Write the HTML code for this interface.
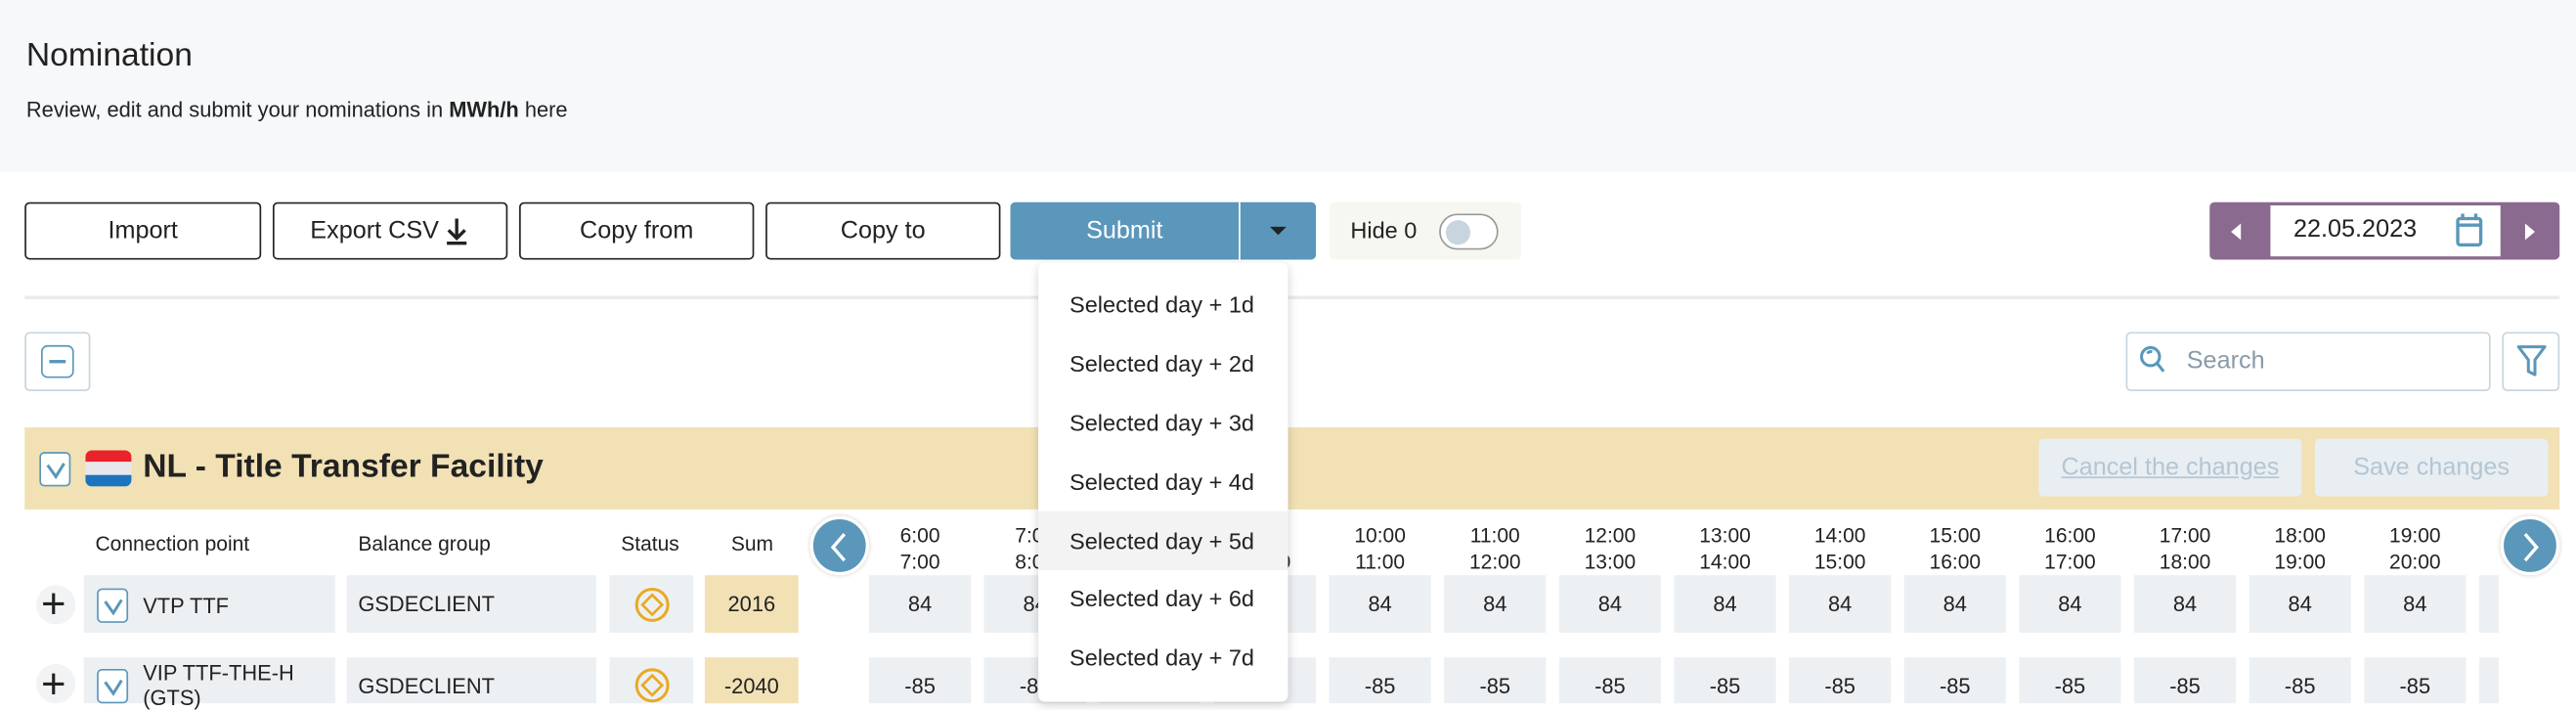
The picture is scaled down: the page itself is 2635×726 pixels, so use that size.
<!DOCTYPE html>
<html><head><meta charset="utf-8"><style>
html,body{margin:0;padding:0;background:#fff;overflow:hidden;width:2635px;height:719px}
#w{position:absolute;left:0;top:0;width:1568px;height:428px;transform:scale(1.6805);transform-origin:0 0;font-family:"Liberation Sans",sans-serif;color:#222}
.a{position:absolute;box-sizing:border-box}
.btn{border:1.5px solid #222;border-radius:3px;font-size:15px;display:flex;align-items:center;justify-content:center;background:#fff;top:123px;height:35px}
.cell{background:#edf0f3;height:35px;display:flex;align-items:center;justify-content:center;font-size:13px}
.hd{font-size:12.5px;text-align:center;line-height:16px}
.dd{position:absolute;left:0;width:152px;height:36px;line-height:36px;padding-left:19px;font-size:14px;box-sizing:border-box;color:#222}
.cb{border:1.5px solid #5a97ba;border-radius:3px;background:#fff;width:19px;height:21px}
.circ{width:36px;height:36px;border-radius:50%;background:#5a97ba;border:2px solid #fff;box-shadow:0 0 3px rgba(0,0,0,.2)}
</style></head><body><div id="w">
<div class="a" style="left:0;top:0;width:1568px;height:105px;background:#f7f8fa"></div>
<div class="a" style="left:16px;top:23px;font-size:20px">Nomination</div>
<div class="a" style="left:16px;top:59px;font-size:13px">Review, edit and submit your nominations in <b>MWh/h</b> here</div>

<div class="a btn" style="left:15px;width:144px">Import</div>
<div class="a btn" style="left:166px;width:143px">Export CSV<svg width="16" height="18" viewBox="0 0 16 18" style="margin-left:3px"><path d="M8 1v12M3 8l5 5 5-5M2 16h12" stroke="#222" stroke-width="2" fill="none"/></svg></div>
<div class="a btn" style="left:316px;width:143px">Copy from</div>
<div class="a btn" style="left:466px;width:143px">Copy to</div>
<div class="a" style="left:615px;top:123px;width:186px;height:35px;background:#5a97ba;border-radius:3px"></div>
<div class="a" style="left:615px;top:123px;width:139px;height:35px;color:#fff;font-size:15px;display:flex;align-items:center;justify-content:center">Submit</div>
<div class="a" style="left:754px;top:123px;width:1px;height:35px;background:#fff"></div>
<div class="a" style="left:773px;top:138px;width:0;height:0;border-left:5px solid transparent;border-right:5px solid transparent;border-top:5px solid #222"></div>
<div class="a" style="left:809px;top:123px;width:117px;height:35px;background:#f7f7f2;border-radius:3px"></div>
<div class="a" style="left:822px;top:132px;font-size:14px">Hide 0</div>
<div class="a" style="left:876px;top:130px;width:36px;height:22px;border:1.5px solid #999;border-radius:11px;background:#fff"></div>
<div class="a" style="left:880px;top:134px;width:15px;height:15px;border-radius:50%;background:#c9d5de"></div>

<div class="a" style="left:1345px;top:123px;width:213px;height:35px;background:#8a6a8f;border-radius:3px"></div>
<div class="a" style="left:1382px;top:125px;width:140px;height:31px;background:#fff"></div>
<div class="a" style="left:1396px;top:131px;font-size:15px">22.05.2023</div>
<svg class="a" style="left:1494px;top:129px" width="18" height="22" viewBox="0 0 18 22"><rect x="2" y="4" width="14" height="16" rx="1.5" stroke="#5a97ba" stroke-width="2" fill="none"/><path d="M2 8h14M5 1v4M13 1v4" stroke="#5a97ba" stroke-width="2"/></svg>
<div class="a" style="left:1358px;top:136px;border-top:5px solid transparent;border-bottom:5px solid transparent;border-right:6px solid #fff"></div>
<div class="a" style="left:1537px;top:136px;border-top:5px solid transparent;border-bottom:5px solid transparent;border-left:6px solid #fff"></div>

<div class="a" style="left:15px;top:180px;width:1543px;height:1.5px;background:#ebebeb"></div>
<div class="a" style="left:15px;top:202px;width:40px;height:36px;border:1.5px solid #c9d5de;border-radius:3px"></div>
<div class="a" style="left:25px;top:210px;width:20px;height:20px;border:1.5px solid #5a97ba;border-radius:4px"></div>
<div class="a" style="left:30px;top:219px;width:10px;height:2px;background:#5a97ba"></div>
<div class="a" style="left:1294px;top:202px;width:222px;height:36px;border:1.5px solid #c9d5de;border-radius:3px"></div>
<svg class="a" style="left:1302px;top:210px" width="16" height="18" viewBox="0 0 16 18"><circle cx="7" cy="7" r="5.5" stroke="#5a97ba" stroke-width="1.8" fill="none"/><path d="M11 11l4 5M5 5a3 3 0 0 1 3-1" stroke="#5a97ba" stroke-width="1.8" fill="none"/></svg>
<div class="a" style="left:1331px;top:211px;font-size:15px;color:#8a9aa8">Search</div>
<div class="a" style="left:1523px;top:202px;width:35px;height:36px;border:1.5px solid #c9d5de;border-radius:3px"></div>
<svg class="a" style="left:1531px;top:209px" width="20" height="22" viewBox="0 0 20 22"><path d="M2 2h16l-6 8v9l-4-2v-7z" stroke="#5a97ba" stroke-width="1.8" fill="none" stroke-linejoin="round"/></svg>

<div class="a" style="left:15px;top:260px;width:1543px;height:50px;background:#f2e1b5"></div>
<div class="a cb" style="left:24px;top:275px"></div>
<svg class="a" style="left:27px;top:280px" width="14" height="12"><path d="M2 3l5 7 5-8" stroke="#5a97ba" stroke-width="1.8" fill="none"/></svg>
<div class="a" style="left:52px;top:274px;width:28px;height:22px;border-radius:4px;overflow:hidden"><div style="height:7px;background:#e8232b"></div><div style="height:8px;background:#e8e8ec"></div><div style="height:7px;background:#1c73be"></div></div>
<div class="a" style="left:87px;top:273px;font-size:20px;font-weight:bold">NL - Title Transfer Facility</div>
<div class="a" style="left:1241px;top:267px;width:160px;height:35px;background:#e9eef2;border-radius:3px;color:#b3c6d4;font-size:15px;text-decoration:underline;display:flex;align-items:center;justify-content:center">Cancel the changes</div>
<div class="a" style="left:1409px;top:267px;width:142px;height:35px;background:#e9eef2;border-radius:3px;color:#b3c6d4;font-size:15px;display:flex;align-items:center;justify-content:center">Save changes</div>

<div class="a" style="left:58px;top:324px;font-size:12.5px">Connection point</div>
<div class="a" style="left:218px;top:324px;font-size:12.5px">Balance group</div>
<div class="a" style="left:378px;top:324px;font-size:12.5px">Status</div>
<div class="a" style="left:445px;top:324px;font-size:12.5px">Sum</div>

<div class="a" style="left:22px;top:356px;width:24px;height:24px;border-radius:50%;background:#f2f3f5"></div>
<div class="a" style="left:22px;top:404px;width:24px;height:24px;border-radius:50%;background:#f2f3f5"></div>
<div class="a" style="left:25px;top:352px;font-size:26px;line-height:30px">+</div>
<div class="a" style="left:25px;top:401px;font-size:26px;line-height:30px">+</div>

<div class="a cell" style="left:51px;top:350px;width:153px"></div>
<div class="a cell" style="left:51px;top:400px;width:153px;height:28px"></div>
<div class="a cb" style="left:59px;top:358px"></div>
<div class="a cb" style="left:59px;top:407px"></div>
<svg class="a" style="left:62px;top:363px" width="14" height="12"><path d="M2 3l5 7 5-8" stroke="#5a97ba" stroke-width="1.8" fill="none"/></svg>
<svg class="a" style="left:62px;top:412px" width="14" height="12"><path d="M2 3l5 7 5-8" stroke="#5a97ba" stroke-width="1.8" fill="none"/></svg>
<div class="a" style="left:87px;top:361px;font-size:13px">VTP TTF</div>
<div class="a" style="left:87px;top:402px;font-size:13px;line-height:15px">VIP TTF-THE-H<br>(GTS)</div>
<div class="a cell" style="left:211px;top:350px;width:152px;justify-content:flex-start;padding-left:7px">GSDECLIENT</div>
<div class="a cell" style="left:211px;top:400px;width:152px;height:28px;justify-content:flex-start;padding-left:7px;align-items:flex-start;padding-top:10px">GSDECLIENT</div>
<div class="a cell" style="left:371px;top:350px;width:51px"></div>
<div class="a cell" style="left:371px;top:400px;width:51px;height:28px"></div>
<div class="a cell" style="left:429px;top:350px;width:57px;background:#f2e1b5">2016</div>
<div class="a cell" style="left:429px;top:400px;width:57px;height:28px;background:#f2e1b5;align-items:flex-start;padding-top:10px">-2040</div>
<svg class="a" style="left:386px;top:357px" width="22" height="22" viewBox="0 0 22 22"><circle cx="11" cy="11" r="9.5" stroke="#e9a922" stroke-width="1.8" fill="none"/><path d="M11 5l6 6-6 6-6-6z" stroke="#e9a922" stroke-width="1.6" fill="none"/></svg>
<svg class="a" style="left:386px;top:406px" width="22" height="22" viewBox="0 0 22 22"><circle cx="11" cy="11" r="9.5" stroke="#e9a922" stroke-width="1.8" fill="none"/><path d="M11 5l6 6-6 6-6-6z" stroke="#e9a922" stroke-width="1.6" fill="none"/></svg>

<div id="cols"></div>

<div class="a circ" style="left:493px;top:314px"></div>
<svg class="a" style="left:503px;top:323px" width="14" height="20"><path d="M11 2L4 10l7 8" stroke="#fff" stroke-width="2" fill="none"/></svg>
<div class="a" style="left:1521px;top:310px;width:47px;height:118px;background:#fff"></div>
<div class="a circ" style="left:1522px;top:314px"></div>
<svg class="a" style="left:1534px;top:323px" width="14" height="20"><path d="M3 2l7 8-7 8" stroke="#fff" stroke-width="2" fill="none"/></svg>

<div class="a" style="left:632px;top:160px;width:152px;height:267px;background:#fff;border-radius:4px;box-shadow:0 2px 6px rgba(0,0,0,.18)">
<div class="dd" style="top:7px">Selected day + 1d</div>
<div class="dd" style="top:43px">Selected day + 2d</div>
<div class="dd" style="top:79px">Selected day + 3d</div>
<div class="dd" style="top:115px">Selected day + 4d</div>
<div class="dd" style="top:151px;background:#f3f3f3">Selected day + 5d</div>
<div class="dd" style="top:186px">Selected day + 6d</div>
<div class="dd" style="top:222px">Selected day + 7d</div>
</div>
<script>
var h='';for(var k=0;k<15;k++){var x=529+70*k;var a=6+k;h+='<div class="a hd" style="left:'+x+'px;top:318px;width:62px">'+a+':00<br>'+(a+1)+':00</div><div class="a cell" style="left:'+x+'px;top:350px;width:62px">84</div><div class="a cell" style="left:'+x+'px;top:400px;width:62px;height:28px;align-items:flex-start;padding-top:10px">-85</div>';}
document.getElementById('cols').outerHTML=h;
</script>
</div></body></html>
